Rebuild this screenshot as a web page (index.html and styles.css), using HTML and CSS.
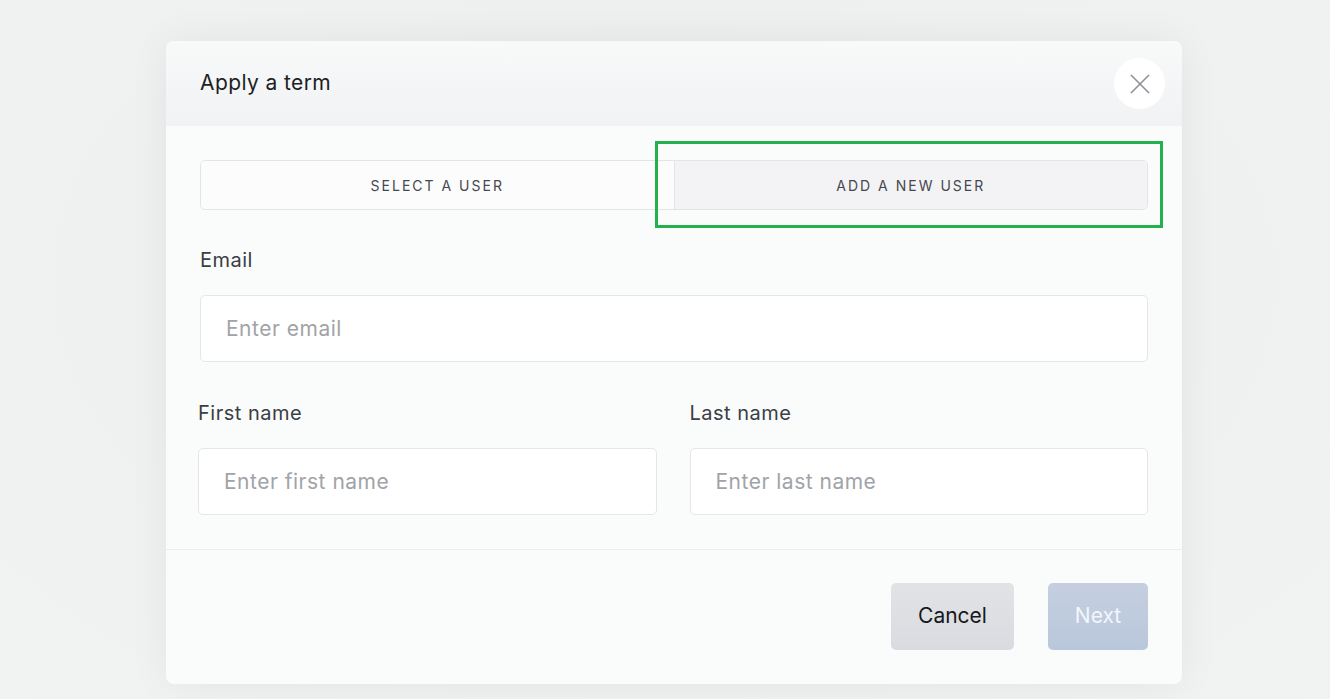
FILE: index.html
```html
<!DOCTYPE html>
<html>
<head>
<meta charset="utf-8">
<link rel="stylesheet" href="styles.css">
</head>
<body>
<div class="modal">
  <div class="modal-header">
    <h1 class="title">Apply a term</h1>
    <button class="close" aria-label="Close">
      <svg width="20" height="20" viewBox="0 0 20 20"><path d="M1 1L19 19M19 1L1 19" stroke="#8e9096" stroke-width="1.6" fill="none"/></svg>
    </button>
  </div>
  <div class="modal-body">
    <div class="tabs">
      <div class="tab">SELECT A USER</div>
      <div class="tab active">ADD A NEW USER</div>
      <div class="highlight"></div>
    </div>
    <div class="field email-field">
      <label class="label">Email</label>
      <div class="input">Enter email</div>
    </div>
    <div class="row">
      <div class="field">
        <label class="label">First name</label>
        <div class="input">Enter first name</div>
      </div>
      <div class="field">
        <label class="label">Last name</label>
        <div class="input">Enter last name</div>
      </div>
    </div>
  </div>
  <div class="modal-footer">
    <button class="btn cancel">Cancel</button>
    <button class="btn next">Next</button>
  </div>
</div>
</body>
</html>
```
FILE: styles.css
```css
* { box-sizing: border-box; }
html, body { margin: 0; height: 100%; }
body {
  background: radial-gradient(ellipse at 50% 40%, #e9eaea 0%, #eff0f0 55%, #f1f2f2 100%);
  font-family: Inter, "Noto Sans", sans-serif;
  padding-top: 41px;
  padding-left: 166px;
  overflow: hidden;
}
.modal {
  width: 1016px;
  height: 643px;
  background: #fafbfb;
  border-radius: 8px;
  box-shadow: 0 0 40px rgba(0,0,0,0.06);
  display: flex;
  flex-direction: column;
  overflow: hidden;
}
.modal-header {
  height: 85px;
  flex: none;
  background: linear-gradient(180deg, #f8f9f9 0%, #f1f2f4 100%);
  display: flex;
  align-items: center;
  justify-content: space-between;
  padding: 0 17px 0 34px;
}
.title {
  margin: 0;
  font-size: 21px;
  font-weight: 400;
  color: #1d1f23;
  letter-spacing: 0.4px;
  margin-top: -2px;
}
.close {
  width: 51px;
  height: 51px;
  border-radius: 50%;
  border: none;
  background: #ffffff;
  display: flex;
  align-items: center;
  justify-content: center;
  padding: 0;
}
.modal-body {
  padding: 34px 34px 34px 34px;
  border-bottom: 1px solid #ebedee;
  flex: none;
}
.tabs {
  position: relative;
  display: flex;
  height: 50px;
  border: 1px solid #e3e4e6;
  border-radius: 5px;
}
.tab {
  flex: 1;
  display: flex;
  align-items: center;
  justify-content: center;
  font-size: 14px;
  letter-spacing: 2px;
  color: #45484f;
  background: #fcfcfc;
  border-radius: 5px 0 0 5px;
}
.tab.active {
  background: #f3f3f5;
  border-left: 1px solid #e3e4e6;
  border-radius: 0 5px 5px 0;
}
.highlight {
  position: absolute;
  left: 454px;
  top: -20px;
  width: 508px;
  height: 87px;
  border: 3px solid #22b14c;
  pointer-events: none;
}
.field { display: flex; flex-direction: column; }
.email-field { margin-top: 38px; }
.label {
  font-size: 20px;
  line-height: 24px;
  color: #3b3e45;
  letter-spacing: 0.5px;
  margin-bottom: 23px;
}
.input {
  height: 67px;
  background: #ffffff;
  border: 1px solid #e4e6e8;
  border-radius: 5px;
  display: flex;
  align-items: center;
  padding-left: 25px;
  padding-bottom: 1px;
  font-size: 21px;
  letter-spacing: 0.5px;
  color: #a1a3a8;
}
.row {
  margin-top: 39px;
  display: grid;
  grid-template-columns: 1fr 1fr;
  gap: 33px;
  margin-left: -2px;
}
.modal-footer {
  flex: 1;
  display: flex;
  justify-content: flex-end;
  align-items: flex-start;
  padding: 33px 34px 0 0;
  gap: 34px;
}
.btn {
  height: 67px;
  border: none;
  border-radius: 5px;
  font-family: Inter, "Noto Sans", sans-serif;
  font-size: 21px;
  padding: 0 0 2px 0;
}
.cancel {
  width: 123px;
  background: linear-gradient(180deg, #e1e3e6 0%, #d9dbe0 100%);
  color: #16181c;
}
.next {
  width: 100px;
  background: linear-gradient(180deg, #c5cfe0 0%, #b9c7dc 100%);
  color: #f3f6fa;
}
```
